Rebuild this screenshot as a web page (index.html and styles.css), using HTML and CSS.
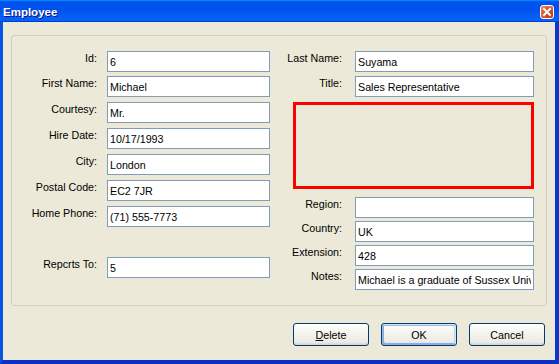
FILE: index.html
```html
<!DOCTYPE html>
<html lang="en">
<head>
  <meta charset="UTF-8">
  <title>Employee</title>
  <link rel="stylesheet" href="styles.css">
</head>
<body>
  <div class="window">
    <div class="titlebar">
      <span class="title">Employee</span>
      <div class="close">
        <svg width="12" height="12" viewBox="0 0 12 12">
          <path d="M3 3 L9 9 M9 3 L3 9" stroke="#fff" stroke-width="2" stroke-linecap="square" fill="none"/>
        </svg>
      </div>
    </div>
    <div class="frame">
      <div class="client">
        <div class="group">
          <div class="col col-left">
            <div class="row"><label class="lbl">Id:</label><input class="field" type="text" value="6"></div>
            <div class="row"><label class="lbl">First Name:</label><input class="field" type="text" value="Michael"></div>
            <div class="row"><label class="lbl">Courtesy:</label><input class="field" type="text" value="Mr."></div>
            <div class="row"><label class="lbl">Hire Date:</label><input class="field" type="text" value="10/17/1993"></div>
            <div class="row"><label class="lbl">City:</label><input class="field" type="text" value="London"></div>
            <div class="row"><label class="lbl">Postal Code:</label><input class="field" type="text" value="EC2 7JR"></div>
            <div class="row"><label class="lbl">Home Phone:</label><input class="field" type="text" value="(71) 555-7773"></div>
            <div class="spacer"></div>
            <div class="row"><label class="lbl">Repcrts To:</label><input class="field" type="text" value="5"></div>
          </div>
          <div class="col col-right">
            <div class="row"><label class="lbl">Last Name:</label><input class="field" type="text" value="Suyama"></div>
            <div class="row row-title"><label class="lbl">Title:</label><input class="field" type="text" value="Sales Representative"></div>
            <div class="photo"></div>
            <div class="row row-region"><label class="lbl">Region:</label><input class="field" type="text" value=""></div>
            <div class="row"><label class="lbl">Country:</label><input class="field" type="text" value="UK"></div>
            <div class="row"><label class="lbl">Extension:</label><input class="field" type="text" value="428"></div>
            <div class="row"><label class="lbl">Notes:</label><input class="field" type="text" value="Michael is a graduate of Sussex University (MA, economics, 1983) and the University of California at Los Angeles"></div>
          </div>
        </div>
        <div class="buttons">
          <button class="btn"><u>D</u>elete</button>
          <button class="btn btn-default">OK</button>
          <button class="btn">Cancel</button>
        </div>
      </div>
    </div>
  </div>
</body>
</html>
```

FILE: styles.css
```css
html,body{
  margin: 0;
  padding: 0;
}
body{
  font-family: "Liberation Sans", Arial, sans-serif;
  font-size: 10.7px;
  color: #000;
  background: #ece9d8;
}
.window{
  width: 559px;
  height: 364px;
  display: flex;
  flex-direction: column;
  background: #0a3fd6;
}
.titlebar{
  height: 22px;
  box-sizing: border-box;
  display: flex;
  justify-content: space-between;
  align-items: flex-start;
  padding: 3px 5px 0 3px;
  background: linear-gradient(180deg, #0997ff, #0053ee 8%, #0050ee 40%, #0662f5 88%, #0662f5 93%, #005bff 95%, #003dd7 96%, #003dd7);
}
.title{
  color: #fff;
  font-weight: bold;
  font-size: 11.5px;
  line-height: 19px;
  text-shadow: 1px 1px #0f1089;
}
.close{
  width: 14px;
  height: 14px;
  box-sizing: border-box;
  margin-top: 2px;
  border: 1px solid #fff;
  border-radius: 3px;
  background: radial-gradient(circle at 80% 80%, #c83412, #e0562e 55%, #f08a66);
  display: flex;
  align-items: center;
  justify-content: center;
}
.close svg{
  display: block;
}
.frame{
  flex: 1;
  display: flex;
  border-left: 3px solid #0854e0;
  border-right: 4px solid #0a37cf;
  border-bottom: 4px solid #0a2fc4;
}
.client{
  flex: 1;
  background: #ece9d8;
  padding: 13px 8px 0 8px;
}
.group{
  height: 271px;
  box-sizing: border-box;
  border: 1px solid #d0d0bf;
  border-radius: 3px;
  padding-top: 15px;
  display: flex;
}
.col{
  display: flex;
  flex-direction: column;
}
.col-left{
  gap: 5px;
}
.col-left .row:first-child{
  margin-bottom: -1px;
}
.col-right{
  gap: 3px;
}
.row{
  display: flex;
  height: 21px;
}
.lbl{
  display: block;
  text-align: right;
  line-height: 13px;
  padding-top: 1px;
  white-space: nowrap;
}
.col-left .lbl{
  width: 85px;
  margin-right: 10px;
}
.col-right .lbl{
  width: 72px;
  margin-right: 13px;
}
.field{
  height: 21px;
  box-sizing: border-box;
  margin: 0;
  border: 1px solid #7f9db9;
  padding: 0 2px;
  background: #fff;
  font: inherit;
  color: #000;
  outline: none;
}
.col-left .field{
  width: 163px;
}
.col-right .field{
  width: 179px;
}
.spacer{
  height: 20px;
}
.row-title{
  margin-top: 1px;
}
.photo{
  margin-top: 2px;
  margin-left: 23px;
  width: 241px;
  height: 87px;
  box-sizing: border-box;
  border: 3px solid #ff0000;
}
.row-region{
  margin-top: 5px;
}
.buttons{
  display: flex;
  justify-content: flex-end;
  gap: 12px;
  margin-top: 17px;
  padding-right: 2px;
}
.btn{
  width: 76px;
  height: 23px;
  box-sizing: border-box;
  margin: 0;
  padding: 0;
  border: 1px solid #003c74;
  border-radius: 3px;
  background: linear-gradient(180deg, #fff, #f5f4ef 40%, #ecebe6 86%, #d6d0c5);
  font: inherit;
  color: #000;
}
.btn u{
  text-decoration: underline;
}
.btn-default{
  box-shadow: inset -1px 1px #cee7ff, inset 1px 2px #98b8ea, inset -2px 2px #bcd4f6, inset 1px -1px #89ade4, inset 2px -2px #89ade4;
}
```
